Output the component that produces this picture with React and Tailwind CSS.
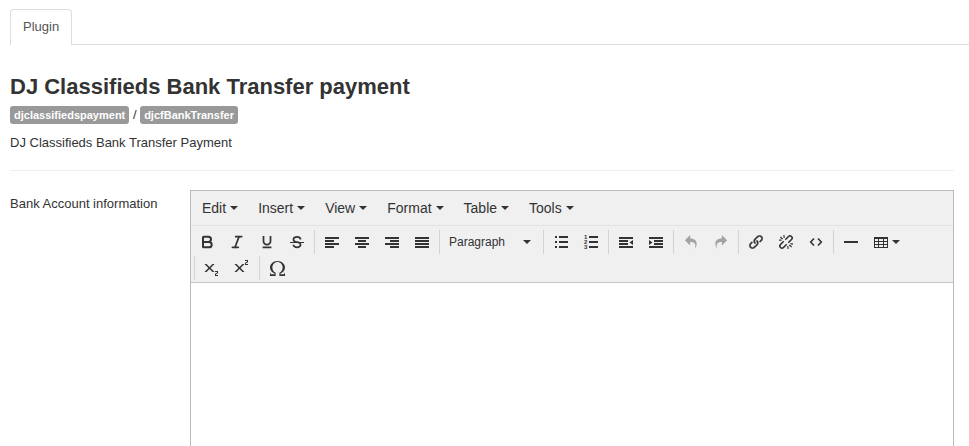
import React from 'react';
import { Bold, Italic } from 'lucide-react';
import {
    ImUnderline,
    ImStrikethrough,
    ImUndo2,
    ImRedo2,
    ImLink,
    ImSubscript,
    ImSuperscript,
    ImOmega,
} from 'react-icons/im';

const Svg = (props) => (
    <svg xmlns="http://www.w3.org/2000/svg" width="16" height="16" viewBox="0 0 16 16" fill="currentColor" {...props} />
);

// Simplified SVG Icons
const Icons = {
    AlignLeft: () => <Svg><path d="M1 3h14v2H1zM1 6h9v2H1zM1 9h14v2H1zM1 12h9v2H1z" /></Svg>,
    AlignCenter: () => <Svg><path d="M1 3h14v2H1zM4 6h8v2H4zM1 9h14v2H1zM4 12h8v2H4z" /></Svg>,
    AlignRight: () => <Svg><path d="M1 3h14v2H1zM6 6h9v2H6zM1 9h14v2H1zM6 12h9v2H6z" /></Svg>,
    AlignJustify: () => <Svg><path d="M1 3h14v2H1zM1 6h14v2H1zM1 9h14v2H1zM1 12h14v2H1z" /></Svg>,
    BulletList: () => (
        <Svg><path d="M2 2h2v2H2zM2 7h2v2H2zM2 12h2v2H2zM6 2h9v2H6zM6 7h9v2H6zM6 12h9v2H6z" /></Svg>
    ),
    NumberedList: () => (
        <Svg>
            <path d="M6 2h9v2H6zM6 7h9v2H6zM6 12h9v2H6z" />
            <g className="font-bold" fontSize="6">
                <text x="1" y="5">1</text>
                <text x="1" y="10">2</text>
                <text x="1" y="15">3</text>
            </g>
        </Svg>
    ),
    Outdent: () => <Svg><path d="M1 3h14v2H1zM1 6h9v2H1zM1 9h9v2H1zM1 12h14v2H1zM15 6v5l-3.500-2.500z" /></Svg>,
    Indent: () => <Svg><path d="M1 3h14v2H1zM6 6h9v2H6zM6 9h9v2H6zM1 12h14v2H1zM1 6v5l3.500-2.500z" /></Svg>,
    Unlink: () => (
        <Svg fill="none" stroke="currentColor" strokeWidth="1.600">
            <path d="M7.300 5.700l3.200-3.200a2.120 2.120 0 0 1 3 3l-3.200 3.200M8.700 10.300l-3.200 3.200a2.120 2.120 0 0 1-3-3l3.200-3.200" />
            <path strokeWidth="1.200" d="M2.300 3l2.400 2M5.800 1.200l.5 2.600M13.700 13l-2.400-2M10.200 14.800l-.5-2.600M1 6.200h2.600M15 9.800h-2.600" />
        </Svg>
    ),
    Code: () => (
        <Svg fill="none" stroke="currentColor" strokeWidth="1.600"><path d="M6 4.500L2.700 8 6 11.500M10 4.500L13.300 8 10 11.500" /></Svg>
    ),
    Line: () => <Svg><path d="M1 7h14v2H1z" /></Svg>,
    Table: () => (
        <Svg><path fillRule="evenodd" d="M1 3h14v11H1zM2 5v2h3V5zM6 5v2h4V5zM11 5v2h3V5zM2 8v2h3V8zM6 8v2h4V8zM11 8v2h3V8zM2 11v2h3v-2zM6 11v2h4v-2zM11 11v2h3v-2z" /></Svg>
    ),
};

const menus = ['Edit', 'Insert', 'View', 'Format', 'Table', 'Tools'];

const toolbar = [
    [
        { label: 'Bold', icon: <Bold size={16} strokeWidth={3} /> },
        { label: 'Italic', icon: <Italic size={16} strokeWidth={2.5} /> },
        { label: 'Underline', icon: <ImUnderline size={14} /> },
        { label: 'Strikethrough', icon: <ImStrikethrough size={14} /> },
    ],
    [
        { label: 'Align left', icon: <Icons.AlignLeft /> },
        { label: 'Align center', icon: <Icons.AlignCenter /> },
        { label: 'Align right', icon: <Icons.AlignRight /> },
        { label: 'Justify', icon: <Icons.AlignJustify /> },
    ],
    [{ label: 'Block format', text: 'Paragraph' }],
    [
        { label: 'Bullet list', icon: <Icons.BulletList /> },
        { label: 'Numbered list', icon: <Icons.NumberedList /> },
    ],
    [
        { label: 'Decrease indent', icon: <Icons.Outdent /> },
        { label: 'Increase indent', icon: <Icons.Indent /> },
    ],
    [
        { label: 'Undo', icon: <ImUndo2 size={14} />, disabled: true },
        { label: 'Redo', icon: <ImRedo2 size={14} />, disabled: true },
    ],
    [
        { label: 'Insert/edit link', icon: <ImLink size={14} strokeWidth="0.4" /> },
        { label: 'Remove link', icon: <Icons.Unlink /> },
        { label: 'Source code', icon: <Icons.Code /> },
    ],
    [
        { label: 'Horizontal line', icon: <Icons.Line /> },
        { label: 'Table', icon: <Icons.Table />, menu: true },
    ],
    [
        { label: 'Subscript', icon: <ImSubscript size={16} /> },
        { label: 'Superscript', icon: <ImSuperscript size={16} /> },
    ],
    [{ label: 'Special character', icon: <ImOmega size={15} /> }],
];

const Caret = () => <span className="border-x-4 border-t-4 border-x-transparent border-t-[#333]" />;

const ToolButton = ({ item }) => {
    if (item.text) {
        return (
            <button type="button" aria-label={item.label} className="flex h-6 w-[99px] items-center justify-between pl-[7px] pr-[10px] text-xs">
                {item.text}
                <Caret />
            </button>
        );
    }

    return (
        <button
            type="button"
            aria-label={item.label}
            disabled={item.disabled}
            className={`flex h-6 items-center justify-center disabled:opacity-40 ${item.menu ? 'w-10 gap-[3px]' : 'w-[30px]'}`}
        >
            {item.icon}
            {item.menu && <Caret />}
        </button>
    );
};

const Badge = ({ children }) => (
    <span className="rounded-[3px] bg-[#999] px-1 text-[11px] font-bold leading-[18px] text-white">{children}</span>
);

const App = () => (
    <div className="flex min-h-screen flex-col bg-white pl-[10px] pt-[9px] font-['Liberation_Sans',Arial,sans-serif] text-[13px] leading-[18px] text-[#333]">
        <nav className="flex border-b border-[#ddd]">
            <a href="#plugin" className="-mb-px rounded-t border border-b-0 border-[#ddd] bg-white px-3 pb-[9px] pt-2 text-[#555]">
                Plugin
            </a>
        </nav>

        <main className="mr-[15px] flex grow flex-col pt-6">
            <h1 className="text-[22px] font-bold leading-9">DJ Classifieds Bank Transfer payment</h1>
            <div className="mt-px flex items-center">
                <Badge>djclassifiedspayment</Badge>
                <span className="whitespace-pre"> / </span>
                <Badge>djcfBankTransfer</Badge>
            </div>
            <p className="mt-[10px]">DJ Classifieds Bank Transfer Payment</p>
            <hr className="mb-[19px] mt-[18px] border-[#eee]" />

            <div className="flex grow">
                <label htmlFor="bank-info" className="w-[180px] shrink-0 pt-[5px]">Bank Account information</label>
                <div className="flex min-w-0 grow flex-col border border-b-0 border-[#bbb]">
                    <div className="flex border-b border-[#e3e3e3] bg-[#f0f0f0] pl-px">
                        {menus.map((name) => (
                            <button key={name} type="button" className="flex h-[34px] items-center gap-1 px-[10px] text-sm">
                                {name}
                                <Caret />
                            </button>
                        ))}
                    </div>
                    <div className="flex flex-wrap gap-y-[2px] border-b border-[#c5c5c5] bg-[#f0f0f0] pb-[2px] pl-px pt-1">
                        {toolbar.map((group, idx) => (
                            <div key={idx} className="ml-[2px] flex border-l border-[#d4d4d4] pl-[2px] first:ml-0 first:border-l-0 first:pl-0">
                                {group.map((item) => <ToolButton key={item.label} item={item} />)}
                            </div>
                        ))}
                    </div>
                    <textarea id="bank-info" className="w-full grow resize-none bg-white p-2 outline-none" />
                </div>
            </div>
        </main>
    </div>
);

export default App;
